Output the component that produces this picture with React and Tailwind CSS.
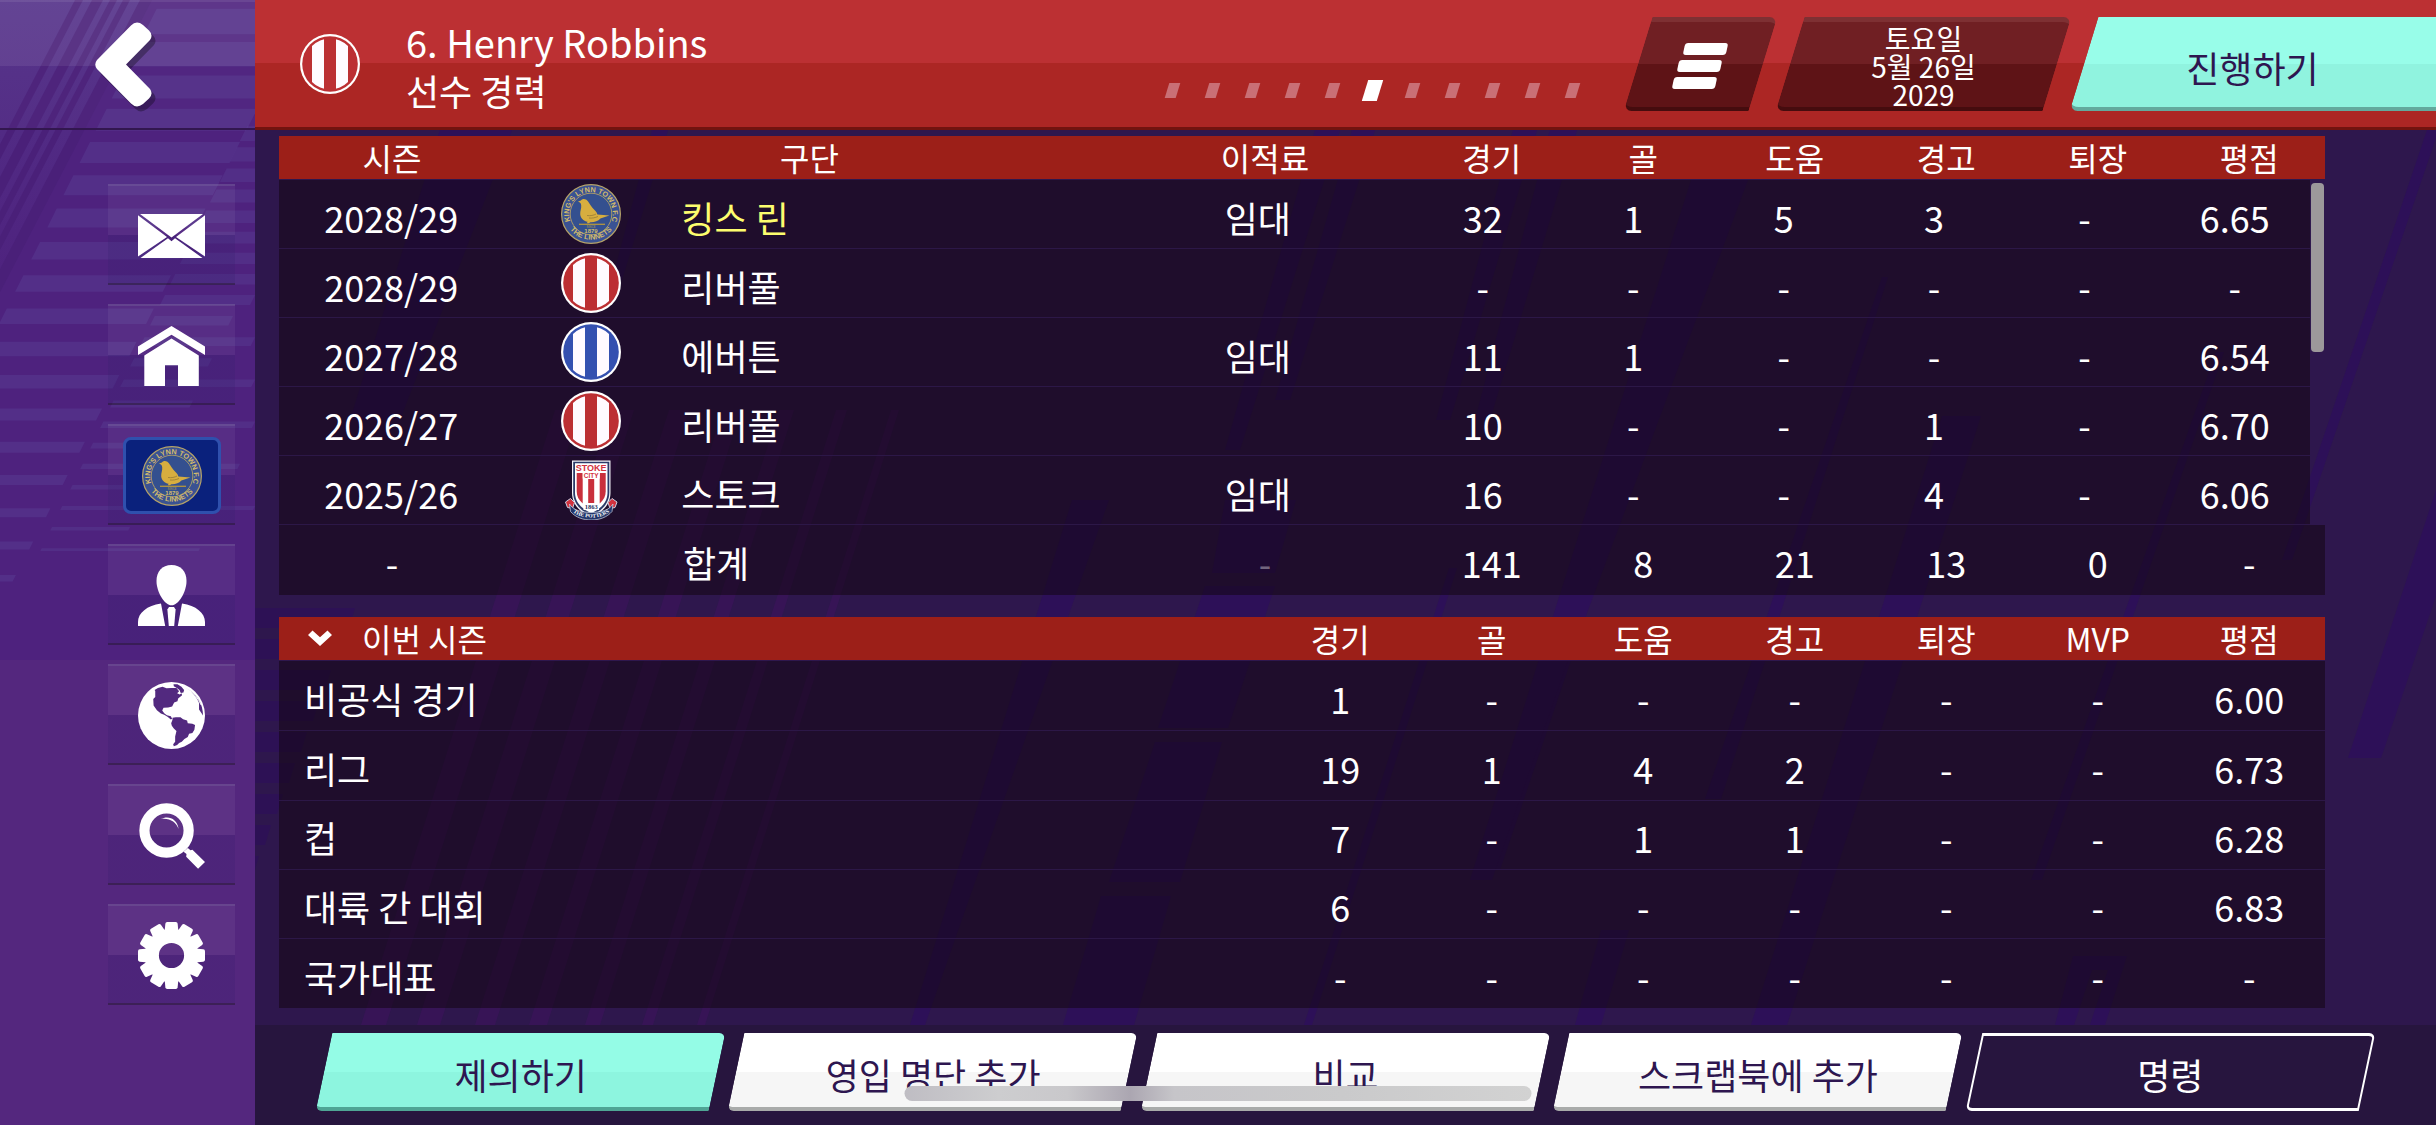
import React from "react";

const seasons = [
  { season: "2028/29", crest: "lynn", club: "킹스 린", current: true, fee: "임대", stats: ["32", "1", "5", "3", "-", "6.65"] },
  { season: "2028/29", crest: "red", club: "리버풀", fee: "", stats: ["-", "-", "-", "-", "-", "-"] },
  { season: "2027/28", crest: "blue", club: "에버튼", fee: "임대", stats: ["11", "1", "-", "-", "-", "6.54"] },
  { season: "2026/27", crest: "red", club: "리버풀", fee: "", stats: ["10", "-", "-", "1", "-", "6.70"] },
  { season: "2025/26", crest: "stoke", club: "스토크", fee: "임대", stats: ["16", "-", "-", "4", "-", "6.06"] },
];
const totals = ["141", "8", "21", "13", "0", "-"];
const careerHeads = ["경기", "골", "도움", "경고", "퇴장", "평점"];

const competitions = [
  { name: "비공식 경기", stats: ["1", "-", "-", "-", "-", "-", "6.00"] },
  { name: "리그", stats: ["19", "1", "4", "2", "-", "-", "6.73"] },
  { name: "컵", stats: ["7", "-", "1", "1", "-", "-", "6.28"] },
  { name: "대륙 간 대회", stats: ["6", "-", "-", "-", "-", "-", "6.83"] },
  { name: "국가대표", stats: ["-", "-", "-", "-", "-", "-", "-"] },
];
const seasonHeads = ["경기", "골", "도움", "경고", "퇴장", "MVP", "평점"];

/* ---------- crests ---------- */

function StripedCrest({ color, className }) {
  const clip = "stripes" + color.slice(1);
  return (
    <svg viewBox="0 0 60 60" className={className} aria-hidden="true">
      <defs>
        <clipPath id={clip}>
          <circle cx="30" cy="30" r="25.5" />
        </clipPath>
      </defs>
      <circle cx="30" cy="30" r="30" fill="#fff" />
      <circle cx="30" cy="30" r="27.8" fill={color} />
      <g clipPath={"url(#" + clip + ")"} fill="#fffaff">
        <rect x="12" y="0" width="12" height="60" />
        <rect x="36" y="0" width="12" height="60" />
      </g>
    </svg>
  );
}

function LynnCrest({ className, id }) {
  return (
    <svg viewBox="0 0 60 60" className={className} aria-hidden="true">
      <defs>
        <path id={id + "top"} d="M9.3 36.7A21.8 21.8 0 1 1 50.7 36.7" />
        <path id={id + "bottom"} d="M4.400 37A26.9 26.9 0 0 0 55.600 37" />
      </defs>
      <circle cx="30" cy="30" r="29.4" fill="#3a5293" stroke="#b5a268" strokeWidth="1.2" />
      <circle cx="30" cy="30" r="20.8" fill="#34508f" stroke="#a5976c" strokeWidth="1" />
      <g fill="#d2bb6c" fontFamily="Liberation Sans, Arial, sans-serif" fontWeight="700">
        <text fontSize="7.3" textAnchor="middle">
          <textPath href={"#" + id + "top"} startOffset="50%">KING'S LYNN TOWN F.C</textPath>
        </text>
        <text fontSize="7.3" textAnchor="middle">
          <textPath href={"#" + id + "bottom"} startOffset="50%">THE LINNETS</textPath>
        </text>
        <text x="30" y="49" fontSize="6" textAnchor="middle">1879</text>
        <text x="30" y="43.6" fontSize="3" textAnchor="middle" fill="#8a8766">SINCE</text>
      </g>
      <path
        fill="#d7ae3f"
        d="M17 17.6l3-1.2c1-1.6 3.4-2 5.400-.6 2.200 1.600 3.400 5 6.200 8.200 1.800 2 4.200 3.800 4.800 6.400l12 1.200-9 2.800c-2.400 2.600-6 4-10 3.800l-1.600 1h-2l.8-1.400c-4.400-1-7.200-4-7.400-7.600-.2-3.200 1.400-6 1-9-.2-1.600-.8-2.600-3.200-3.600z"
      />
      <path fill="none" stroke="#8d7433" strokeWidth=".7" d="M26 31.500c3 .6 7-.2 9-1.500M28 34c3 .4 6-.2 9-1.500" />
      <path stroke="#b4963f" strokeWidth="1.300" d="M18 40.300h26" />
    </svg>
  );
}

function StokeCrest({ className }) {
  return (
    <svg viewBox="0 0 60 60" className={className} aria-hidden="true">
      <path d="M11 .5h38.500v32c0 12-8 20-19.200 24.500C19 52.500 11 44.500 11 32.500z" fill="#f3f4f8" />
      <path d="M12.200 1.700h36.100v30.800c0 11-7.600 18.500-18 23-10.600-4.500-18.100-12-18.100-23z" fill="#2b3a68" />
      <path d="M14 3.200h32.500v29.500c0 9-6 16-16.200 20.300C20 48.700 14 41.700 14 32.700z" fill="#fff" />
      <g fill="#c9303c">
        <path d="M15.700 13h6v30.500c-4-3.500-6-7.500-6-12z" />
        <path d="M27.200 19h6v27h-6z" />
        <path d="M38.700 13h6v18.500c0 4.500-2 8.500-6 12z" />
      </g>
      <rect x="21.700" y="12" width="17" height="6.600" fill="#fff" />
      <g fontFamily="Liberation Sans, Arial, sans-serif" fontWeight="700" textAnchor="middle" fill="#d2323e">
        <text x="30.200" y="11" fontSize="9">STOKE</text>
        <text x="30.200" y="17.600" fontSize="6.500">CITY</text>
      </g>
      <rect x="22.500" y="43" width="15.500" height="7" fill="#fff" />
      <text x="30.200" y="49" fontSize="6.500" fontWeight="700" textAnchor="middle" fill="#24335f" fontFamily="Liberation Serif, serif">1863</text>
      <path d="M4.500 42l5-3.500 4 4-2 6-5-1zM56 42l-5-3.500-4 4 2 6 5-1z" fill="#d2323e" stroke="#c9d0e2" strokeWidth="1" />
      <path d="M8.500 44c3.500 6 12 8.500 21.700 8.500S48.500 50 52 44l-1 7.500C46 57.500 38 60 30.200 60S14.500 57.500 9.500 51.500z" fill="#22356a" stroke="#d4dae8" strokeWidth=".7" />
      <path id="potters" d="M10 50.500C20 60 40.500 60 50.500 50.500" fill="none" />
      <text fontSize="5.500" fontWeight="700" textAnchor="middle" fill="#fff" fontFamily="Liberation Serif, serif">
        <textPath href="#potters" startOffset="50%">THE POTTERS</textPath>
      </text>
    </svg>
  );
}

function Crest({ kind, className, id }) {
  if (kind === "lynn") return <LynnCrest className={className} id={id} />;
  if (kind === "stoke") return <StokeCrest className={className} />;
  return <StripedCrest className={className} color={kind === "blue" ? "#3450b0" : "#bc2f33"} />;
}

/* ---------- icons ---------- */

function MailIcon() {
  return (
    <svg viewBox="0 0 67 44" className="h-[44px] w-[67px]" fill="#fff" aria-hidden="true">
      <path d="M2 0h63L33.500 23.500z" />
      <path d="M0 1.200L29 23 0 42.500zM67 1.200L38 23 67 42.500z" />
      <path d="M2.500 44L30 24.200l3.500 3 3.500-3L64.500 44z" />
    </svg>
  );
}

function HomeIcon() {
  return (
    <svg viewBox="0 0 67 60" className="h-[60px] w-[67px]" fill="#fff" aria-hidden="true">
      <path d="M33.500 0L67 20.500v8.500L33.500 8.800 0 29v-8.500z" />
      <path d="M33.500 12.500L60.800 29.500V60H40V39.300H27V60H6.300V29.500z" />
    </svg>
  );
}

function PersonIcon() {
  return (
    <svg viewBox="0 0 67 61" className="h-[61px] w-[67px]" fill="#fff" aria-hidden="true">
      <path d="M33.500 0C43 0 48.500 6.500 48.500 16c0 11-8 24.300-15 24.300S18.500 27 18.500 16C18.500 6.500 24 0 33.500 0z" />
      <path d="M23 38.500L27.200 61H0v-4C0 48 9 40.500 23 38.500zM44 38.500L39.800 61H67v-4C67 48 58 40.500 44 38.500z" />
      <path d="M31 42h5l1.600 2.500L36.200 61h-5.400l-1.400-16.500z" />
    </svg>
  );
}

function GlobeIcon() {
  return (
    <svg viewBox="112 121 202 202" className="size-[67px]" aria-hidden="true">
      <circle cx="213" cy="222" r="101" fill="#fff" />
      <g fill="#52297f">
        <path d="M162 145l10-6 14-4 12 5 14-1 16 0 8 10 -6 6 8 4 5-4 2 6-12 10-2 8-10 4-6 12-12 3-14 1-4 8 6 8 8 6 12 3 4 8-4 2-10-8-10-6-10-4-12-10-10-14-1-20 6-6v-18l-4-6z" />
        <path d="M216 229l10-2 14 0 8 6 12 4 2 8 14 2 8 4-2 14-6 10-10 2-4 10-10 6-8 8-8 4-6 6-10 4-2-6 6-8v-16l4-16-8-8-6-8-2-8 4-10z" />
        <path d="M219 128l12 0 12 7 8 10-2 8-8 1-4-9-8-6-9-5z" />
        <path d="M254 138c20 10 34 26 42 46l0 20 4 6 8 12c0-16-4-34-14-50-10-14-22-26-40-34z" />
      </g>
      <path d="M262 144c18 10 32 26 40 46" fill="none" stroke="#fff" strokeWidth="3" />
    </svg>
  );
}

function SearchIcon() {
  return (
    <svg viewBox="112 483 200 199" className="size-[66px]" aria-hidden="true">
      <circle cx="195.500" cy="566" r="67" fill="none" stroke="#fff" strokeWidth="31" />
      <path d="M178 531c22-12 50-2 54 30-8-20-26-34-54-30z" fill="#fff" />
      <path d="M247 630l13-11 8 7 6-2 38 37-21 21-36-37 1-8z" fill="#fff" />
    </svg>
  );
}

function GearIcon() {
  const teeth = Array.from({ length: 12 }, (_, i) => i * 30);
  return (
    <svg viewBox="-101 -101 202 202" className="size-[67px]" fill="#fff" aria-hidden="true">
      {teeth.map((a) => (
        <path key={a} transform={"rotate(" + a + ")"} d="M-21 -70L-18.500 -96Q-18 -101 -13 -101H13Q18 -101 18.500 -96L21 -70z" />
      ))}
      <circle r="59.500" fill="none" stroke="#fff" strokeWidth="43" />
    </svg>
  );
}

function BackIcon() {
  const arrow = "M36 3.500Q41.500-2 48 3L54 8.500Q58.500 13 55 18L31 42.500 55 67Q58.500 72 54 76.500L48 82Q41.500 87 36 81.500L2 47Q-1.500 42.500 2 38z";
  return (
    <svg viewBox="0 0 62 92" className="h-[92px] w-[62px]" aria-hidden="true">
      <path d={arrow} fill="#000" fillOpacity=".3" transform="translate(4 5)" />
      <path d={arrow} fill="#fff" />
    </svg>
  );
}

function MenuIcon() {
  return (
    <span className="relative flex flex-col items-center gap-[5px]">
      <span className="ml-[10px] h-[12px] w-[43px] -skew-x-12 rounded-[3px] bg-white" />
      <span className="-ml-[2px] h-[12px] w-[43px] -skew-x-12 rounded-[3px] bg-white" />
      <span className="-ml-[12px] h-[12px] w-[43px] -skew-x-12 rounded-[3px] bg-white" />
    </span>
  );
}

/* ---------- decorative backdrops ---------- */

function SidebarPattern() {
  const wide = Array.from({ length: 18 }, (_, k) => k - 4);
  const narrow = Array.from({ length: 21 }, (_, k) => k - 8);
  const ends = [255, 233, 255, 212, 255, 193, 255, 190, 240, 170, 255, 130, 200];
  const diagonals = [[75, 8], [92, 11], [110, 7], [123, 7], [140, 12]];
  return (
    <svg viewBox="0 0 255 1125" preserveAspectRatio="xMinYMin slice" className="absolute inset-0 h-full w-full" aria-hidden="true">
      <defs>
        <linearGradient id="sideFade" x1="0" y1="0" x2="0" y2="1">
          <stop offset="0" stopColor="#5a4396" stopOpacity=".45" />
          <stop offset="1" stopColor="#5a4396" stopOpacity="0" />
        </linearGradient>
      </defs>
      <rect width="255" height="660" fill="#4e227e" />
      <path d="M0 0H150L0 288z" fill="url(#sideFade)" />
      {diagonals.map(([x, w]) => (
        <path key={x} d={`M${x} 0h${w}L${x + w - 156} 300h${-w}z`} fill="#4a2079" />
      ))}
      {wide.map((i) => {
        const y = 142 + 33.3 * i;
        const h = 21 - 1.1 * i;
        const l = 90 - 0.5 * (y - 142);
        const r = 240 - 0.5175 * (y - 142);
        return <path key={i} d={`M${l} ${y}H${r}L${r - h / 2} ${y + h}H${l - h / 2}z`} fill="#5c4498" fillOpacity=".38" />;
      })}
      {narrow.map((i) => {
        const y = 295 + 21.1 * i;
        const h = 10 - 0.6 * i;
        const l = 165 - 0.487 * (y - 295);
        const r = i < 0 ? 262 : ends[i];
        return <path key={i} d={`M${l} ${y}H${r}L${r - h / 2} ${y + h}H${l - h / 2}z`} fill="#5c4498" fillOpacity=".35" />;
      })}
    </svg>
  );
}

function MainPattern() {
  const pink = [[495, 25], [551, 23], [609, 20], [663, 18], [719, 15], [776, 11], [831, 8]];
  const left = Array.from({ length: 9 }, (_, i) => i);
  const streaks = [
    "440,130 512,130 400,420 350,420",
    "652,130 668,130 622,280 612,280",
    "1315,130 1340,130 1240,450 1225,450",
    "1352,130 1375,130 1290,400 1275,400",
    "1513,130 1537,130 1450,420 1436,420",
    "1550,130 1577,130 1490,420 1475,420",
    "1691,180 1748,180 1587,613 1500,870 1485,870 1554,613",
    "1882,277 1888,277 1721,799 1705,799",
    "1942,416 1981,416 1787,1025 1751,1025",
    "2216,352 2224,352 2042,880 2031,880",
    "2427,130 2436,130 2436,138 2292,560 2282,560",
    "2436,490 2436,596 2381,758 2348,758",
    "2073,956 2127,956 2105,1025 2090,1025 2108,970 2092,970 2074,1025 2055,1025",
    "1601,930 1629,930 1601,1025 1575,1025",
    "1072,500 1109,500 925,1025 910,1025",
    "1225,500 1296,500 1275,573 1212,573",
    "1205,586 1275,586 1228,728 1158,728",
    "1155,742 1222,742 1180,882 1109,882",
    "1101,896 1171,896 1134,1025 1063,1025",
    "1449,568 1457,568 1312,1025 1304,1025",
    "1545,640 1575,640 1492,880 1470,880",
  ];
  return (
    <svg viewBox="255 0 2181 1125" preserveAspectRatio="xMinYMin slice" className="absolute inset-0 h-full w-full" aria-hidden="true">
      {pink.map(([x, w]) => (
        <path key={x} d={`M${x + 60} 410h${w}L${x + w - 134} 1025h${-w}z`} fill="#3a1459" fillOpacity=".8" />
      ))}
      {left.map((i) => {
        const y = 608 + i * 31;
        const r = 355 - i * 12;
        return <path key={i} d={`M255 ${y}H${r}L${r - 6} ${y + 20}H255z`} fill="#2d1058" fillOpacity=".8" />;
      })}
      {streaks.map((p) => (
        <polygon key={p} points={p} fill="#2d1058" />
      ))}
    </svg>
  );
}

/* ---------- controls ---------- */

const navItems = [
  { label: "받은 편지함", icon: <MailIcon /> },
  { label: "홈", icon: <HomeIcon /> },
  {
    label: "구단",
    icon: (
      <span className="flex h-[77px] w-[98px] items-center justify-center rounded-[8px] border-[3px] border-[#2f50ad] bg-[#0a217c]">
        <LynnCrest className="size-[60px]" id="nav" />
      </span>
    ),
  },
  { label: "감독", icon: <PersonIcon /> },
  { label: "세계", icon: <GlobeIcon /> },
  { label: "검색", icon: <SearchIcon /> },
  { label: "설정", icon: <GearIcon /> },
];

const footTones = {
  mint: "border-b-4 border-[#4fa595] bg-[linear-gradient(#94fce6_52%,#8df5df_52%)]",
  white: "border-b-4 border-[#a9abaa] bg-[linear-gradient(#ffffff_52%,#f6f6f6_52%)]",
  outline: "border-x-2 border-y-[3px] border-white",
};

function FooterButton({ tone, children }) {
  return (
    <button type="button" className={"relative h-[78px] flex-1 text-4xl leading-none " + (tone === "outline" ? "text-white" : "text-[#2e1650]")}>
      <span className={"absolute inset-0 -skew-x-12 rounded-tr-[6px] rounded-bl-[6px] " + footTones[tone]} />
      <span className="relative block pt-[3px]">{children}</span>
    </button>
  );
}

const careerGrid = "grid grid-cols-[2260fr_6090fr_3020fr_repeat(6,1515fr)]";
const seasonGrid = "grid grid-cols-[9855fr_repeat(7,1515fr)]";
const headRow = "h-[44px] items-center border-b border-[#2e174d] bg-[#9c1f18] pb-[2px] text-[32px] leading-none";
const bodyRow = "items-center bg-[rgba(16,3,11,0.5)] text-4xl leading-none";
const darkPlate =
  "absolute inset-0 -skew-x-[17deg] rounded-tr-[8px] rounded-bl-[8px] border-t-[5px] border-b-4 border-t-[#7e3033] border-b-[#450c0e] bg-[linear-gradient(#701f23_50%,#5e1316_50%)]";

export default function App() {
  return (
    <div className="relative flex min-h-screen overflow-hidden bg-[#2e174d] font-['Noto_Sans_CJK_KR','Noto_Sans',sans-serif] font-normal text-white">
      <aside className="relative w-[255px] shrink-0 bg-[#54277e]">
        <SidebarPattern />
        <button
          type="button"
          aria-label="뒤로"
          className="relative flex h-[130px] w-full items-center justify-center border-t-2 border-b-2 border-t-white/15 border-b-[#32174f] bg-[linear-gradient(rgba(255,255,255,0.09)_51%,rgba(255,255,255,0.02)_51%)] pt-[6px] pr-[4px]"
        >
          <BackIcon />
        </button>
        <nav className="relative flex flex-col gap-[19px] pt-[54px] pl-[108px]">
          {navItems.map((n) => (
            <button
              key={n.label}
              type="button"
              aria-label={n.label}
              className="flex h-[101px] w-[127px] items-center justify-center border-t-2 border-b-2 border-t-white/15 border-b-black/35 bg-[linear-gradient(rgba(255,255,255,0.05)_51%,rgba(50,30,110,0.22)_51%)] pt-[2px]"
            >
              {n.icon}
            </button>
          ))}
        </nav>
      </aside>

      <main className="relative flex min-w-0 flex-1 flex-col">
        <MainPattern />

        <header className="relative flex h-[130px] overflow-hidden border-b-[3px] border-[#72130f] bg-[linear-gradient(#bc3033_50%,#ac2624_50%)]">
          <StripedCrest color="#bc2f33" className="mt-[34px] ml-[45px] size-[60px] shrink-0" />
          <div className="mt-[18px] ml-[46px]">
            <h1 className="text-[38px] leading-[48px]">6. Henry Robbins</h1>
            <h2 className="text-4xl leading-[48px]">선수 경력</h2>
          </div>

          <div className="mt-[80px] mr-[60px] ml-auto flex h-[21px] items-center gap-[29px]" role="group" aria-label="페이지">
            {Array.from({ length: 11 }, (_, i) =>
              i === 5 ? (
                <span key={i} className="-mx-[2px] h-[21px] w-[15px] -skew-x-[17deg] bg-white" />
              ) : (
                <span key={i} className="h-[15px] w-[11px] -skew-x-[17deg] bg-[#c96f75]" />
              )
            )}
          </div>

          <div className="mt-[17px] flex h-[94px] gap-[27px]">
            <button type="button" aria-label="메뉴" className="relative flex w-[125px] items-center justify-center pt-[3px]">
              <span className={darkPlate} />
              <MenuIcon />
            </button>
            <button type="button" className="relative w-[267px] text-[28px] leading-[28px]">
              <span className={darkPlate} />
              <span className="relative block pt-[3px]">
                토요일
                <br />
                5월 26일
                <br />
                2029
              </span>
            </button>
            <button type="button" className="relative w-[352px] text-4xl leading-none text-[#2e1650]">
              <span className="absolute inset-y-0 -right-8 left-0 -skew-x-[17deg] rounded-bl-[8px] border-b-4 border-[#63a99d] bg-[linear-gradient(#98fde9_52%,#90f3df_52%)]" />
              <span className="relative block pt-[5px] pr-[15px]">진행하기</span>
            </button>
          </div>
        </header>

        <div className="relative flex-1 pt-[6px] pr-[111px] pb-[17px] pl-6">
          <table className="relative block text-center" aria-label="선수 경력">
            <thead className="block">
              <tr className={careerGrid + " " + headRow}>
                <th className="font-normal">시즌</th>
                <th className="font-normal">구단</th>
                <th className="font-normal">이적료</th>
                {careerHeads.map((h) => (
                  <th key={h} className="font-normal">{h}</th>
                ))}
              </tr>
            </thead>
            <tbody className="mr-[15px] block">
              {seasons.map((s, i) => (
                <tr key={i} className={careerGrid + " h-[69px] border-b border-[#2c1747] pt-[5px] " + bodyRow}>
                  <td>{s.season}</td>
                  <td className="flex h-full items-center self-start pl-[58px]">
                    <Crest kind={s.crest} className="-mt-px size-[60px] self-start" id={"row" + i} />
                    <a href="#club" className={"ml-[60px] " + (s.current ? "text-[#fdfd6e]" : "")}>{s.club}</a>
                  </td>
                  <td>{s.fee}</td>
                  {s.stats.map((v, j) => (
                    <td key={j}>{v}</td>
                  ))}
                </tr>
              ))}
            </tbody>
            <tfoot className="block">
              <tr className={careerGrid + " h-[70px] pt-1 " + bodyRow}>
                <td>-</td>
                <td className="pl-[178px] text-left">합계</td>
                <td className="text-white/40">-</td>
                {totals.map((v, j) => (
                  <td key={j}>{v}</td>
                ))}
              </tr>
            </tfoot>
          </table>
          <div className="absolute top-[53px] right-[112px] h-[169px] w-[13px] rounded-[4px] bg-[#9c989b]" />

          <table className="mt-[22px] block text-center" aria-label="이번 시즌">
            <thead className="block">
              <tr className={seasonGrid + " " + headRow}>
                <th className="text-left font-normal">
                  <button type="button" className="flex items-center gap-[30px] pl-[29px] leading-none">
                    <svg viewBox="0 0 24 16" className="h-[16px] w-[24px]" aria-hidden="true">
                      <path d="M0 5L4.500 0.500 12 7.200 19.500 0.500 24 5 12 16z" fill="#fff" />
                    </svg>
                    <span>이번 시즌</span>
                  </button>
                </th>
                {seasonHeads.map((h) => (
                  <th key={h} className="font-normal">{h}</th>
                ))}
              </tr>
            </thead>
            <tbody className="block">
              {competitions.map((c, i) => (
                <tr key={c.name} className={seasonGrid + " pt-1 " + (i < 2 ? "h-[70px] " : "h-[69px] ") + (i < 4 ? "border-b border-[#2c1747] " : "") + bodyRow}>
                  <td className="pl-[25px] text-left">{c.name}</td>
                  {c.stats.map((v, j) => (
                    <td key={j}>{v}</td>
                  ))}
                </tr>
              ))}
            </tbody>
          </table>
        </div>

        <footer className="relative flex h-[100px] shrink-0 gap-[19px] bg-[#27153e] px-[69px] pt-2">
          <FooterButton tone="mint">제의하기</FooterButton>
          <FooterButton tone="white">영입 명단 추가</FooterButton>
          <FooterButton tone="white">비교</FooterButton>
          <FooterButton tone="white">스크랩북에 추가</FooterButton>
          <FooterButton tone="outline">명령</FooterButton>
        </footer>
      </main>

      <div className="absolute bottom-6 left-1/2 h-[15px] w-[627px] -translate-x-1/2 rounded-full bg-[linear-gradient(90deg,#bfbdc3,#cdcdcf_15%,#c9c8cb_26%,#aba6b1_36%,#c6c5c9_43%,#cacacb_70%,#d2d2d2)]" />
    </div>
  );
}
